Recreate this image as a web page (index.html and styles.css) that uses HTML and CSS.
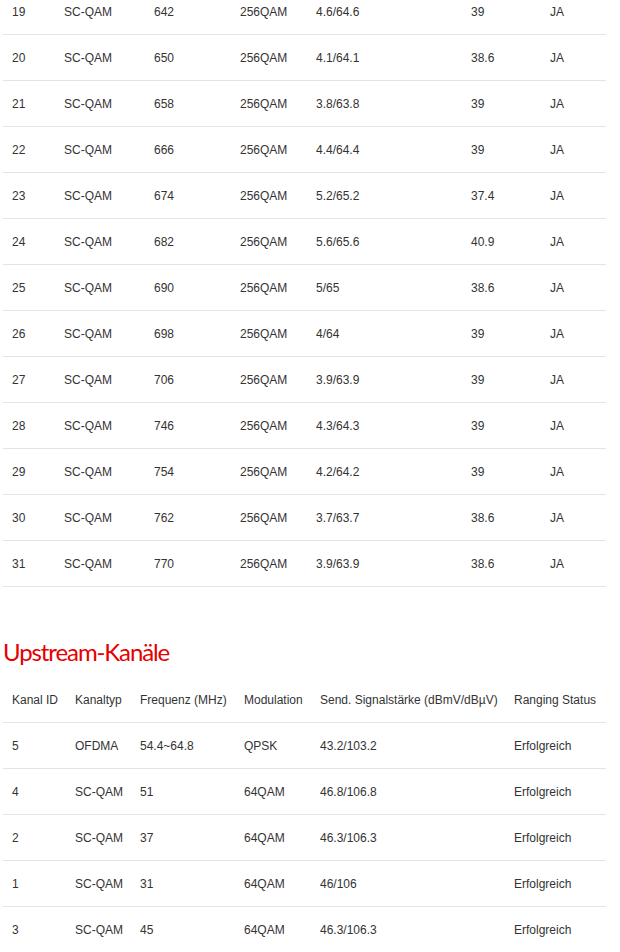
FILE: index.html
```html
<!DOCTYPE html>
<html lang="de">
<head>
<meta charset="utf-8">
<link rel="stylesheet" href="styles.css">
</head>
<body>
<div class="page">
  <table class="chan down">
    <colgroup>
      <col class="d1"><col class="d2"><col class="d3"><col class="d4"><col class="d5"><col class="d6"><col class="d7">
    </colgroup>
    <tbody>
      <tr><td>19</td><td>SC-QAM</td><td>642</td><td>256QAM</td><td>4.6/64.6</td><td>39</td><td>JA</td></tr>
      <tr><td>20</td><td>SC-QAM</td><td>650</td><td>256QAM</td><td>4.1/64.1</td><td>38.6</td><td>JA</td></tr>
      <tr><td>21</td><td>SC-QAM</td><td>658</td><td>256QAM</td><td>3.8/63.8</td><td>39</td><td>JA</td></tr>
      <tr><td>22</td><td>SC-QAM</td><td>666</td><td>256QAM</td><td>4.4/64.4</td><td>39</td><td>JA</td></tr>
      <tr><td>23</td><td>SC-QAM</td><td>674</td><td>256QAM</td><td>5.2/65.2</td><td>37.4</td><td>JA</td></tr>
      <tr><td>24</td><td>SC-QAM</td><td>682</td><td>256QAM</td><td>5.6/65.6</td><td>40.9</td><td>JA</td></tr>
      <tr><td>25</td><td>SC-QAM</td><td>690</td><td>256QAM</td><td>5/65</td><td>38.6</td><td>JA</td></tr>
      <tr><td>26</td><td>SC-QAM</td><td>698</td><td>256QAM</td><td>4/64</td><td>39</td><td>JA</td></tr>
      <tr><td>27</td><td>SC-QAM</td><td>706</td><td>256QAM</td><td>3.9/63.9</td><td>39</td><td>JA</td></tr>
      <tr><td>28</td><td>SC-QAM</td><td>746</td><td>256QAM</td><td>4.3/64.3</td><td>39</td><td>JA</td></tr>
      <tr><td>29</td><td>SC-QAM</td><td>754</td><td>256QAM</td><td>4.2/64.2</td><td>39</td><td>JA</td></tr>
      <tr><td>30</td><td>SC-QAM</td><td>762</td><td>256QAM</td><td>3.7/63.7</td><td>38.6</td><td>JA</td></tr>
      <tr><td>31</td><td>SC-QAM</td><td>770</td><td>256QAM</td><td>3.9/63.9</td><td>38.6</td><td>JA</td></tr>
    </tbody>
  </table>

  <h2 class="section-title">Upstream-Kanäle</h2>

  <table class="chan up">
    <colgroup>
      <col class="u1"><col class="u2"><col class="u3"><col class="u4"><col class="u5"><col class="u6">
    </colgroup>
    <thead>
      <tr><th>Kanal ID</th><th>Kanaltyp</th><th>Frequenz (MHz)</th><th>Modulation</th><th>Send. Signalstärke (dBmV/dBµV)</th><th>Ranging Status</th></tr>
    </thead>
    <tbody>
      <tr><td>5</td><td>OFDMA</td><td>54.4~64.8</td><td>QPSK</td><td>43.2/103.2</td><td>Erfolgreich</td></tr>
      <tr><td>4</td><td>SC-QAM</td><td>51</td><td>64QAM</td><td>46.8/106.8</td><td>Erfolgreich</td></tr>
      <tr><td>2</td><td>SC-QAM</td><td>37</td><td>64QAM</td><td>46.3/106.3</td><td>Erfolgreich</td></tr>
      <tr><td>1</td><td>SC-QAM</td><td>31</td><td>64QAM</td><td>46/106</td><td>Erfolgreich</td></tr>
      <tr><td>3</td><td>SC-QAM</td><td>45</td><td>64QAM</td><td>46.3/106.3</td><td>Erfolgreich</td></tr>
    </tbody>
  </table>
</div>
</body>
</html>
```

FILE: styles.css
```css
html, body {
  margin: 0;
  padding: 0;
  background: #ffffff;
}

body {
  font-family: "Liberation Sans", Arial, sans-serif;
  font-size: 12px;
  color: #333333;
  overflow: hidden;
}

.page {
  margin: -11px 14px 0 3px;
}

.chan {
  width: 603px;
  border-collapse: collapse;
  table-layout: fixed;
}

.chan th,
.chan td {
  padding: 16px 0 14px 9px;
  line-height: 15px;
  text-align: left;
  font-weight: normal;
  border-bottom: 1px solid #e4e4e4;
  white-space: nowrap;
}

.d1 { width: 52px; }
.d2 { width: 90px; }
.d3 { width: 86px; }
.d4 { width: 76px; }
.d5 { width: 155px; }
.d6 { width: 79px; }
.d7 { width: 65px; }

.u1 { width: 63px; }
.u2 { width: 65px; }
.u3 { width: 104px; }
.u4 { width: 76px; }
.u5 { width: 194px; }
.u6 { width: 101px; }

.section-title {
  margin: 50px 0 10px 0;
  font-family: Lato, "Open Sans", sans-serif;
  font-weight: normal;
  font-size: 24px;
  letter-spacing: -1.1px;
  line-height: 30px;
  color: #e60000;
}
```
